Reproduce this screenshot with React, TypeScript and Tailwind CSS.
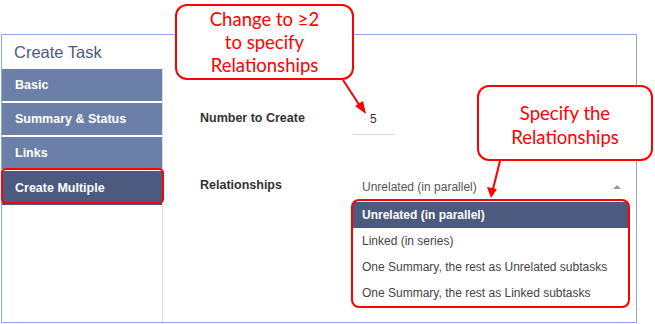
import React from "react";

const sidebar = ["Basic", "Summary & Status", "Links"];
const options = [
  "Unrelated (in parallel)",
  "Linked (in series)",
  "One Summary, the rest as Unrelated subtasks",
  "One Summary, the rest as Linked subtasks",
];

export default function App() {
  return (
    <div
      className="relative w-[655px] h-[324px] bg-white overflow-hidden"
      style={{ fontFamily: '"Liberation Sans", Arial, sans-serif' }}
    >
      <div className="ml-[1px] mt-[34px] w-[636px] h-[289px] border border-[#8eaadb] flex flex-col">
        <div className="h-[34px] flex items-center pl-[12px] text-[16.5px] text-[#4d5b7c]">
          Create Task
        </div>
        <div className="flex flex-1">
          <div className="w-[161px] border-r border-[#dcdcdc] flex flex-col gap-[2px]">
            {sidebar.map((s) => (
              <div
                key={s}
                className="h-[32px] bg-[#6c7fa9] text-white font-bold text-[12.5px] flex items-center pl-[13px]"
              >
                {s}
              </div>
            ))}
            <div className="h-[34px] bg-[#4b5a7e] text-white font-bold text-[12.5px] flex items-center pl-[13px]">
              Create Multiple
            </div>
          </div>
          <div className="flex-1 flex flex-col pl-[37px]">
            <div className="mt-[32px] h-[34px] flex">
              <div className="w-[153px] flex items-center font-bold text-[12.5px] text-[#333]">
                Number to Create
              </div>
              <div className="w-[42px] h-full border-b border-[#d8d8d8] flex items-center pl-[17px] pt-[3px] text-[12px] text-[#333]">
                5
              </div>
            </div>
            <div className="mt-[39px] h-[26px] flex">
              <div className="w-[153px] flex items-center pb-[3px] font-bold text-[12.5px] text-[#333]">
                Relationships
              </div>
              <div className="relative w-[275px] h-full">
                <div className="h-full flex items-center justify-between pl-[9px] pr-[7px] text-[12px] text-[#555]">
                  <span>Unrelated (in parallel)</span>
                  <span className="w-0 h-0 border-l-[4px] border-r-[4px] border-b-[4px] border-l-transparent border-r-transparent border-b-[#999]" />
                </div>
                <div className="absolute left-0 top-[28px] w-[275px] bg-white shadow-[1px_1px_2px_rgba(0,0,0,0.2)] flex flex-col">
                  {options.map((o, i) => (
                    <div
                      key={o}
                      className={
                        i === 0
                          ? "h-[26px] flex items-center pl-[9px] text-[12px] font-bold text-white bg-[#4b5a7e]"
                          : "h-[26px] flex items-center pl-[9px] text-[12px] text-[#444]"
                      }
                    >
                      {o}
                    </div>
                  ))}
                </div>
              </div>
            </div>
          </div>
        </div>
      </div>

      {/* Annotations */}
      <div className="absolute left-[1px] top-[168px] w-[163px] h-[36px] border-2 border-[#f00] rounded-[5px]" />
      <div className="absolute left-[351px] top-[199px] w-[279px] h-[109px] border-2 border-[#f00] rounded-[8px]" />

      <div
        className="absolute left-[175px] top-[4px] w-[179px] h-[76px] border-2 border-[#f00] rounded-[12px] bg-white flex flex-col items-center justify-center text-[#f00] text-[18.5px] leading-[23px]"
        style={{ fontFamily: 'Lato, "Noto Sans", sans-serif' }}
      >
        <span>Change to ≥2</span>
        <span>to specify</span>
        <span>Relationships</span>
      </div>
      <div
        className="absolute left-[477px] top-[85px] w-[176px] h-[76px] border-2 border-[#f00] rounded-[12px] bg-white flex flex-col items-center justify-center pt-[3px] text-[#f00] text-[18.5px] leading-[24px]"
        style={{ fontFamily: 'Lato, "Noto Sans", sans-serif' }}
      >
        <span>Specify the</span>
        <span>Relationships</span>
      </div>

      <svg className="absolute left-0 top-0 pointer-events-none" width="655" height="324">
        <line x1="343" y1="80" x2="360" y2="106" stroke="#f00" strokeWidth="2" />
        <polygon points="366,114 355,106 363,101" fill="#f00" />
        <line x1="500" y1="161" x2="493" y2="189" stroke="#f00" strokeWidth="2" />
        <polygon points="491,198 487,187 497,189" fill="#f00" />
      </svg>
    </div>
  );
}
